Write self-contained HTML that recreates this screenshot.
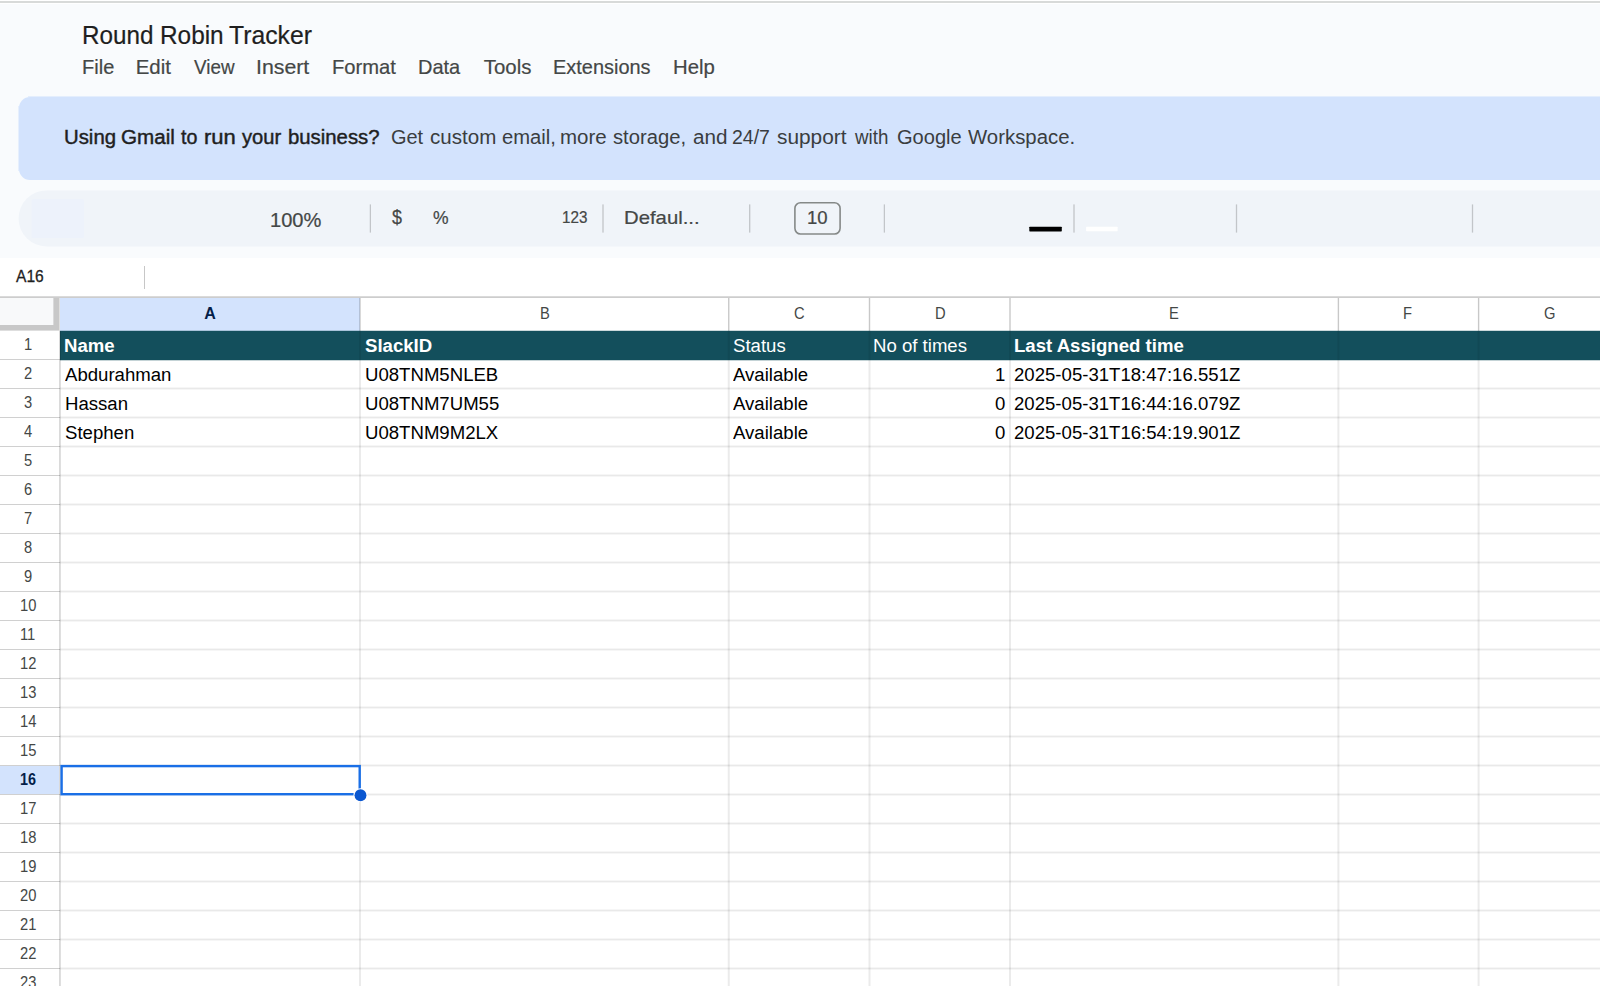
<!DOCTYPE html><html><head><meta charset="utf-8"><title>Round Robin Tracker</title><style>
html,body{margin:0;padding:0;}
body{width:1600px;height:986px;overflow:hidden;position:relative;background:#f9fbfd;font-family:"Liberation Sans",sans-serif;}
.a{position:absolute;}
.t{position:absolute;white-space:pre;line-height:1;transform-origin:0 0;}
.sep{position:absolute;width:1px;background:#c8c9ca;top:204px;height:28px;}
.hl{position:absolute;height:1px;left:0;}
.vl{position:absolute;width:1px;}
</style></head><body>
<div class="a" style="left:0;top:0;width:1600px;height:1px;background:#fff"></div>
<div class="a" style="left:0;top:1px;width:1600px;height:2px;background:#d8dad9"></div>
<div class="a" style="left:0;top:3px;width:1600px;height:1px;background:#fff"></div>
<div class="a" style="left:19px;top:97px;width:1600px;height:83px;background:#d3e3fd;border-radius:11px 0 0 11px;"></div>
<div class="a" style="left:18px;top:106px;width:1px;height:65px;background:#e6effd;"></div>
<div class="a" style="left:28px;top:96px;width:1580px;height:1px;background:#e4eefd;"></div>
<svg class="a" style="left:0;top:185px;" width="1600" height="70" viewBox="0 185 1600 70"><rect x="18.6" y="190.4" width="1640" height="56.1" rx="28" fill="#f0f4f9"/><rect x="31.7" y="198.9" width="52.1" height="39.4" rx="1.5" fill="#edf2fb"/></svg>
<div class="vl" style="left:369px;top:205px;height:27px;background:rgba(0,0,0,0.048);"></div>
<div class="vl" style="left:370px;top:205px;height:27px;background:rgba(0,0,0,0.192);"></div>
<div class="vl" style="left:369px;top:204px;height:1px;background:rgba(0,0,0,0.029);"></div>
<div class="vl" style="left:370px;top:204px;height:1px;background:rgba(0,0,0,0.115);"></div>
<div class="vl" style="left:369px;top:232px;height:1px;background:rgba(0,0,0,0.029);"></div>
<div class="vl" style="left:370px;top:232px;height:1px;background:rgba(0,0,0,0.115);"></div>
<div class="vl" style="left:602px;top:205px;height:27px;background:rgba(0,0,0,0.125);"></div>
<div class="vl" style="left:603px;top:205px;height:27px;background:rgba(0,0,0,0.125);"></div>
<div class="vl" style="left:602px;top:204px;height:1px;background:rgba(0,0,0,0.075);"></div>
<div class="vl" style="left:603px;top:204px;height:1px;background:rgba(0,0,0,0.075);"></div>
<div class="vl" style="left:602px;top:232px;height:1px;background:rgba(0,0,0,0.075);"></div>
<div class="vl" style="left:603px;top:232px;height:1px;background:rgba(0,0,0,0.075);"></div>
<div class="vl" style="left:749px;top:205px;height:27px;background:rgba(0,0,0,0.183);"></div>
<div class="vl" style="left:750px;top:205px;height:27px;background:rgba(0,0,0,0.067);"></div>
<div class="vl" style="left:749px;top:204px;height:1px;background:rgba(0,0,0,0.110);"></div>
<div class="vl" style="left:750px;top:204px;height:1px;background:rgba(0,0,0,0.040);"></div>
<div class="vl" style="left:749px;top:232px;height:1px;background:rgba(0,0,0,0.110);"></div>
<div class="vl" style="left:750px;top:232px;height:1px;background:rgba(0,0,0,0.040);"></div>
<div class="vl" style="left:883px;top:205px;height:27px;background:rgba(0,0,0,0.048);"></div>
<div class="vl" style="left:884px;top:205px;height:27px;background:rgba(0,0,0,0.192);"></div>
<div class="vl" style="left:883px;top:204px;height:1px;background:rgba(0,0,0,0.029);"></div>
<div class="vl" style="left:884px;top:204px;height:1px;background:rgba(0,0,0,0.115);"></div>
<div class="vl" style="left:883px;top:232px;height:1px;background:rgba(0,0,0,0.029);"></div>
<div class="vl" style="left:884px;top:232px;height:1px;background:rgba(0,0,0,0.115);"></div>
<div class="vl" style="left:1073px;top:205px;height:27px;background:rgba(0,0,0,0.125);"></div>
<div class="vl" style="left:1074px;top:205px;height:27px;background:rgba(0,0,0,0.125);"></div>
<div class="vl" style="left:1073px;top:204px;height:1px;background:rgba(0,0,0,0.075);"></div>
<div class="vl" style="left:1074px;top:204px;height:1px;background:rgba(0,0,0,0.075);"></div>
<div class="vl" style="left:1073px;top:232px;height:1px;background:rgba(0,0,0,0.075);"></div>
<div class="vl" style="left:1074px;top:232px;height:1px;background:rgba(0,0,0,0.075);"></div>
<div class="vl" style="left:1235px;top:205px;height:27px;background:rgba(0,0,0,0.029);"></div>
<div class="vl" style="left:1236px;top:205px;height:27px;background:rgba(0,0,0,0.192);"></div>
<div class="vl" style="left:1237px;top:205px;height:27px;background:rgba(0,0,0,0.029);"></div>
<div class="vl" style="left:1235px;top:204px;height:1px;background:rgba(0,0,0,0.017);"></div>
<div class="vl" style="left:1236px;top:204px;height:1px;background:rgba(0,0,0,0.115);"></div>
<div class="vl" style="left:1237px;top:204px;height:1px;background:rgba(0,0,0,0.017);"></div>
<div class="vl" style="left:1235px;top:232px;height:1px;background:rgba(0,0,0,0.017);"></div>
<div class="vl" style="left:1236px;top:232px;height:1px;background:rgba(0,0,0,0.115);"></div>
<div class="vl" style="left:1237px;top:232px;height:1px;background:rgba(0,0,0,0.017);"></div>
<div class="vl" style="left:1471px;top:205px;height:27px;background:rgba(0,0,0,0.029);"></div>
<div class="vl" style="left:1472px;top:205px;height:27px;background:rgba(0,0,0,0.192);"></div>
<div class="vl" style="left:1473px;top:205px;height:27px;background:rgba(0,0,0,0.029);"></div>
<div class="vl" style="left:1471px;top:204px;height:1px;background:rgba(0,0,0,0.017);"></div>
<div class="vl" style="left:1472px;top:204px;height:1px;background:rgba(0,0,0,0.115);"></div>
<div class="vl" style="left:1473px;top:204px;height:1px;background:rgba(0,0,0,0.017);"></div>
<div class="vl" style="left:1471px;top:232px;height:1px;background:rgba(0,0,0,0.017);"></div>
<div class="vl" style="left:1472px;top:232px;height:1px;background:rgba(0,0,0,0.115);"></div>
<div class="vl" style="left:1473px;top:232px;height:1px;background:rgba(0,0,0,0.017);"></div>
<svg class="a" style="left:790px;top:198px;" width="56" height="42" viewBox="790 198 56 42"><rect x="794.9" y="202.75" width="45.2" height="31.2" rx="5.6" fill="none" stroke="#858988" stroke-width="1.6"/></svg>
<svg class="a" style="left:1020px;top:220px;" width="110" height="18" viewBox="1020 220 110 18"><rect x="1029.3" y="226.7" width="32.5" height="4.7" rx="0.6" fill="#000"/><rect x="1086.1" y="226.8" width="31.5" height="4.4" rx="0.4" fill="#fff"/></svg>
<div class="a" style="left:0;top:258px;width:1600px;height:39px;background:#fff;"></div>
<div class="a" style="left:144px;top:266px;width:1px;height:23px;background:#c7c7c7;"></div>
<div class="a" style="left:0;top:296px;width:1600px;height:690px;background:#fff;"></div>
<div class="a" style="left:0;top:298px;width:54px;height:27px;background:#f8f9fa;"></div>
<div class="a" style="left:54px;top:298px;width:5px;height:32px;background:#c8c8c8;"></div>
<div class="a" style="left:53px;top:298px;width:1px;height:27px;background:#dadadb;"></div>
<div class="a" style="left:59px;top:298px;width:1px;height:33px;background:#e0e0e0;"></div>
<div class="a" style="left:0px;top:330px;width:59px;height:1px;background:#dedede;"></div>
<div class="a" style="left:0px;top:325px;width:59px;height:5px;background:#c8c8c8;"></div>
<div class="a" style="left:60px;top:296px;width:300px;height:35px;background:#d3e3fd;"></div>
<div class="a" style="left:0;top:296px;width:1600px;height:1px;background:#dadada;"></div>
<div class="a" style="left:0;top:297px;width:1600px;height:1px;background:#cdcdcd;"></div>
<div class="vl" style="left:359px;top:298px;height:33px;background:rgba(0,0,0,0.150);"></div>
<div class="vl" style="left:360px;top:298px;height:33px;background:rgba(0,0,0,0.150);"></div>
<div class="vl" style="left:728px;top:298px;height:33px;background:rgba(0,0,0,0.204);"></div>
<div class="vl" style="left:729px;top:298px;height:33px;background:rgba(0,0,0,0.096);"></div>
<div class="vl" style="left:868px;top:298px;height:33px;background:rgba(0,0,0,0.043);"></div>
<div class="vl" style="left:869px;top:298px;height:33px;background:rgba(0,0,0,0.214);"></div>
<div class="vl" style="left:870px;top:298px;height:33px;background:rgba(0,0,0,0.043);"></div>
<div class="vl" style="left:1009px;top:298px;height:33px;background:rgba(0,0,0,0.150);"></div>
<div class="vl" style="left:1010px;top:298px;height:33px;background:rgba(0,0,0,0.150);"></div>
<div class="vl" style="left:1337px;top:298px;height:33px;background:rgba(0,0,0,0.064);"></div>
<div class="vl" style="left:1338px;top:298px;height:33px;background:rgba(0,0,0,0.214);"></div>
<div class="vl" style="left:1339px;top:298px;height:33px;background:rgba(0,0,0,0.021);"></div>
<div class="vl" style="left:1477px;top:298px;height:33px;background:rgba(0,0,0,0.021);"></div>
<div class="vl" style="left:1478px;top:298px;height:33px;background:rgba(0,0,0,0.214);"></div>
<div class="vl" style="left:1479px;top:298px;height:33px;background:rgba(0,0,0,0.064);"></div>
<div class="a" style="left:60px;top:331px;width:1540px;height:29px;background:#134f5c;"></div>
<div class="a" style="left:60px;top:330px;width:1540px;height:1px;background:rgba(19,79,92,0.22);"></div>
<div class="a" style="left:60px;top:360px;width:1540px;height:1px;background:rgba(19,79,92,0.25);"></div>
<div class="hl" style="top:359px;width:60px;background:#d0d0d0;"></div>
<div class="hl" style="top:388px;left:60px;width:1540px;background:rgba(0,0,0,0.085);box-shadow:0 1px rgba(0,0,0,0.035),0 -1px rgba(0,0,0,0.035);"></div>
<div class="hl" style="top:388px;width:60px;background:#d0d0d0;"></div>
<div class="hl" style="top:417px;left:60px;width:1540px;background:rgba(0,0,0,0.085);box-shadow:0 1px rgba(0,0,0,0.035),0 -1px rgba(0,0,0,0.035);"></div>
<div class="hl" style="top:417px;width:60px;background:#d0d0d0;"></div>
<div class="hl" style="top:446px;left:60px;width:1540px;background:rgba(0,0,0,0.085);box-shadow:0 1px rgba(0,0,0,0.035),0 -1px rgba(0,0,0,0.035);"></div>
<div class="hl" style="top:446px;width:60px;background:#d0d0d0;"></div>
<div class="hl" style="top:475px;left:60px;width:1540px;background:rgba(0,0,0,0.085);box-shadow:0 1px rgba(0,0,0,0.035),0 -1px rgba(0,0,0,0.035);"></div>
<div class="hl" style="top:475px;width:60px;background:#d0d0d0;"></div>
<div class="hl" style="top:504px;left:60px;width:1540px;background:rgba(0,0,0,0.085);box-shadow:0 1px rgba(0,0,0,0.035),0 -1px rgba(0,0,0,0.035);"></div>
<div class="hl" style="top:504px;width:60px;background:#d0d0d0;"></div>
<div class="hl" style="top:533px;left:60px;width:1540px;background:rgba(0,0,0,0.085);box-shadow:0 1px rgba(0,0,0,0.035),0 -1px rgba(0,0,0,0.035);"></div>
<div class="hl" style="top:533px;width:60px;background:#d0d0d0;"></div>
<div class="hl" style="top:562px;left:60px;width:1540px;background:rgba(0,0,0,0.085);box-shadow:0 1px rgba(0,0,0,0.035),0 -1px rgba(0,0,0,0.035);"></div>
<div class="hl" style="top:562px;width:60px;background:#d0d0d0;"></div>
<div class="hl" style="top:591px;left:60px;width:1540px;background:rgba(0,0,0,0.085);box-shadow:0 1px rgba(0,0,0,0.035),0 -1px rgba(0,0,0,0.035);"></div>
<div class="hl" style="top:591px;width:60px;background:#d0d0d0;"></div>
<div class="hl" style="top:620px;left:60px;width:1540px;background:rgba(0,0,0,0.085);box-shadow:0 1px rgba(0,0,0,0.035),0 -1px rgba(0,0,0,0.035);"></div>
<div class="hl" style="top:620px;width:60px;background:#d0d0d0;"></div>
<div class="hl" style="top:649px;left:60px;width:1540px;background:rgba(0,0,0,0.085);box-shadow:0 1px rgba(0,0,0,0.035),0 -1px rgba(0,0,0,0.035);"></div>
<div class="hl" style="top:649px;width:60px;background:#d0d0d0;"></div>
<div class="hl" style="top:678px;left:60px;width:1540px;background:rgba(0,0,0,0.085);box-shadow:0 1px rgba(0,0,0,0.035),0 -1px rgba(0,0,0,0.035);"></div>
<div class="hl" style="top:678px;width:60px;background:#d0d0d0;"></div>
<div class="hl" style="top:707px;left:60px;width:1540px;background:rgba(0,0,0,0.085);box-shadow:0 1px rgba(0,0,0,0.035),0 -1px rgba(0,0,0,0.035);"></div>
<div class="hl" style="top:707px;width:60px;background:#d0d0d0;"></div>
<div class="hl" style="top:736px;left:60px;width:1540px;background:rgba(0,0,0,0.085);box-shadow:0 1px rgba(0,0,0,0.035),0 -1px rgba(0,0,0,0.035);"></div>
<div class="hl" style="top:736px;width:60px;background:#d0d0d0;"></div>
<div class="hl" style="top:765px;left:60px;width:1540px;background:rgba(0,0,0,0.085);box-shadow:0 1px rgba(0,0,0,0.035),0 -1px rgba(0,0,0,0.035);"></div>
<div class="hl" style="top:765px;width:60px;background:#d0d0d0;"></div>
<div class="hl" style="top:794px;left:60px;width:1540px;background:rgba(0,0,0,0.085);box-shadow:0 1px rgba(0,0,0,0.035),0 -1px rgba(0,0,0,0.035);"></div>
<div class="hl" style="top:794px;width:60px;background:#d0d0d0;"></div>
<div class="hl" style="top:823px;left:60px;width:1540px;background:rgba(0,0,0,0.085);box-shadow:0 1px rgba(0,0,0,0.035),0 -1px rgba(0,0,0,0.035);"></div>
<div class="hl" style="top:823px;width:60px;background:#d0d0d0;"></div>
<div class="hl" style="top:852px;left:60px;width:1540px;background:rgba(0,0,0,0.085);box-shadow:0 1px rgba(0,0,0,0.035),0 -1px rgba(0,0,0,0.035);"></div>
<div class="hl" style="top:852px;width:60px;background:#d0d0d0;"></div>
<div class="hl" style="top:881px;left:60px;width:1540px;background:rgba(0,0,0,0.085);box-shadow:0 1px rgba(0,0,0,0.035),0 -1px rgba(0,0,0,0.035);"></div>
<div class="hl" style="top:881px;width:60px;background:#d0d0d0;"></div>
<div class="hl" style="top:910px;left:60px;width:1540px;background:rgba(0,0,0,0.085);box-shadow:0 1px rgba(0,0,0,0.035),0 -1px rgba(0,0,0,0.035);"></div>
<div class="hl" style="top:910px;width:60px;background:#d0d0d0;"></div>
<div class="hl" style="top:939px;left:60px;width:1540px;background:rgba(0,0,0,0.085);box-shadow:0 1px rgba(0,0,0,0.035),0 -1px rgba(0,0,0,0.035);"></div>
<div class="hl" style="top:939px;width:60px;background:#d0d0d0;"></div>
<div class="hl" style="top:968px;left:60px;width:1540px;background:rgba(0,0,0,0.085);box-shadow:0 1px rgba(0,0,0,0.035),0 -1px rgba(0,0,0,0.035);"></div>
<div class="hl" style="top:968px;width:60px;background:#d0d0d0;"></div>
<div class="vl" style="left:359px;top:360px;height:626px;background:rgba(0,0,0,0.080);"></div>
<div class="vl" style="left:360px;top:360px;height:626px;background:rgba(0,0,0,0.080);"></div>
<div class="vl" style="left:359px;top:331px;height:29px;background:rgba(0,0,0,0.070);"></div>
<div class="vl" style="left:360px;top:331px;height:29px;background:rgba(0,0,0,0.070);"></div>
<div class="vl" style="left:727px;top:360px;height:626px;background:rgba(0,0,0,0.020);"></div>
<div class="vl" style="left:728px;top:360px;height:626px;background:rgba(0,0,0,0.080);"></div>
<div class="vl" style="left:729px;top:360px;height:626px;background:rgba(0,0,0,0.060);"></div>
<div class="vl" style="left:727px;top:331px;height:29px;background:rgba(0,0,0,0.018);"></div>
<div class="vl" style="left:728px;top:331px;height:29px;background:rgba(0,0,0,0.070);"></div>
<div class="vl" style="left:729px;top:331px;height:29px;background:rgba(0,0,0,0.053);"></div>
<div class="vl" style="left:868px;top:360px;height:626px;background:rgba(0,0,0,0.040);"></div>
<div class="vl" style="left:869px;top:360px;height:626px;background:rgba(0,0,0,0.080);"></div>
<div class="vl" style="left:870px;top:360px;height:626px;background:rgba(0,0,0,0.040);"></div>
<div class="vl" style="left:868px;top:331px;height:29px;background:rgba(0,0,0,0.035);"></div>
<div class="vl" style="left:869px;top:331px;height:29px;background:rgba(0,0,0,0.070);"></div>
<div class="vl" style="left:870px;top:331px;height:29px;background:rgba(0,0,0,0.035);"></div>
<div class="vl" style="left:1009px;top:360px;height:626px;background:rgba(0,0,0,0.080);"></div>
<div class="vl" style="left:1010px;top:360px;height:626px;background:rgba(0,0,0,0.080);"></div>
<div class="vl" style="left:1009px;top:331px;height:29px;background:rgba(0,0,0,0.070);"></div>
<div class="vl" style="left:1010px;top:331px;height:29px;background:rgba(0,0,0,0.070);"></div>
<div class="vl" style="left:1337px;top:360px;height:626px;background:rgba(0,0,0,0.048);"></div>
<div class="vl" style="left:1338px;top:360px;height:626px;background:rgba(0,0,0,0.080);"></div>
<div class="vl" style="left:1339px;top:360px;height:626px;background:rgba(0,0,0,0.032);"></div>
<div class="vl" style="left:1337px;top:331px;height:29px;background:rgba(0,0,0,0.042);"></div>
<div class="vl" style="left:1338px;top:331px;height:29px;background:rgba(0,0,0,0.070);"></div>
<div class="vl" style="left:1339px;top:331px;height:29px;background:rgba(0,0,0,0.028);"></div>
<div class="vl" style="left:1477px;top:360px;height:626px;background:rgba(0,0,0,0.032);"></div>
<div class="vl" style="left:1478px;top:360px;height:626px;background:rgba(0,0,0,0.080);"></div>
<div class="vl" style="left:1479px;top:360px;height:626px;background:rgba(0,0,0,0.048);"></div>
<div class="vl" style="left:1477px;top:331px;height:29px;background:rgba(0,0,0,0.028);"></div>
<div class="vl" style="left:1478px;top:331px;height:29px;background:rgba(0,0,0,0.070);"></div>
<div class="vl" style="left:1479px;top:331px;height:29px;background:rgba(0,0,0,0.042);"></div>
<div class="vl" style="left:59px;top:331px;height:655px;background:rgba(0,0,0,0.144);"></div>
<div class="vl" style="left:60px;top:331px;height:655px;background:rgba(0,0,0,0.126);"></div>
<div class="a" style="left:0;top:766px;width:59px;height:28px;background:#d3e3fd;"></div>
<div class="doc-title">
<span class="t" style="left:81.81px;top:22.00px;font-size:26px;color:#1f1f1f;transform:scaleX(0.9326);-webkit-text-stroke:0.22px #1f1f1f;">Round </span>
<span class="t" style="left:160.30px;top:22.00px;font-size:26px;color:#1f1f1f;transform:scaleX(0.9373);-webkit-text-stroke:0.22px #1f1f1f;">Robin </span>
<span class="t" style="left:229.21px;top:22.00px;font-size:26px;color:#1f1f1f;transform:scaleX(0.9513);-webkit-text-stroke:0.22px #1f1f1f;">Tracker </span>
</div>
<div class="menubar">
<span class="t" style="left:82.14px;top:57.00px;font-size:20.4px;color:#444746;transform:scaleX(0.9819);-webkit-text-stroke:0.2px #444746;">File </span>
<span class="t" style="left:135.71px;top:57.00px;font-size:20.4px;color:#444746;-webkit-text-stroke:0.2px #444746;">Edit </span>
<span class="t" style="left:194.10px;top:57.00px;font-size:20.4px;color:#444746;transform:scaleX(0.9252);-webkit-text-stroke:0.2px #444746;">View </span>
<span class="t" style="left:256.34px;top:57.00px;font-size:20.4px;color:#444746;transform:scaleX(1.0445);-webkit-text-stroke:0.2px #444746;">Insert </span>
<span class="t" style="left:331.82px;top:57.00px;font-size:20.4px;color:#444746;transform:scaleX(0.9892);-webkit-text-stroke:0.2px #444746;">Format </span>
<span class="t" style="left:418.14px;top:57.00px;font-size:20.4px;color:#444746;transform:scaleX(0.9801);-webkit-text-stroke:0.2px #444746;">Data </span>
<span class="t" style="left:483.78px;top:57.00px;font-size:20.4px;color:#444746;-webkit-text-stroke:0.2px #444746;">Tools </span>
<span class="t" style="left:552.94px;top:57.00px;font-size:20.4px;color:#444746;transform:scaleX(0.9779);-webkit-text-stroke:0.2px #444746;">Extensions </span>
<span class="t" style="left:672.61px;top:57.00px;font-size:20.4px;color:#444746;transform:scaleX(0.9966);-webkit-text-stroke:0.2px #444746;">Help </span>
</div>
<div class="promo-banner">
<span class="t" style="left:64.43px;top:128.00px;font-size:19.6px;color:#1f1f1f;transform:scaleX(1.0380);-webkit-text-stroke:0.42px #1f1f1f;">Using </span>
<span class="t" style="left:121.23px;top:128.00px;font-size:19.6px;color:#1f1f1f;transform:scaleX(1.0516);-webkit-text-stroke:0.42px #1f1f1f;">Gmail </span>
<span class="t" style="left:181.10px;top:128.00px;font-size:19.6px;color:#1f1f1f;transform:scaleX(1.0031);-webkit-text-stroke:0.42px #1f1f1f;">to </span>
<span class="t" style="left:203.72px;top:128.00px;font-size:19.6px;color:#1f1f1f;transform:scaleX(1.1230);-webkit-text-stroke:0.42px #1f1f1f;">run </span>
<span class="t" style="left:241.90px;top:128.00px;font-size:19.6px;color:#1f1f1f;transform:scaleX(1.0281);-webkit-text-stroke:0.42px #1f1f1f;">your </span>
<span class="t" style="left:287.73px;top:128.00px;font-size:19.6px;color:#1f1f1f;transform:scaleX(1.0376);-webkit-text-stroke:0.42px #1f1f1f;">business? </span>
<span class="t" style="left:391.06px;top:128.00px;font-size:19.6px;color:#3a3d40;transform:scaleX(1.0182);">Get </span>
<span class="t" style="left:429.66px;top:128.00px;font-size:19.6px;color:#3a3d40;transform:scaleX(1.0496);">custom </span>
<span class="t" style="left:501.67px;top:128.00px;font-size:19.6px;color:#3a3d40;transform:scaleX(1.0318);">email, </span>
<span class="t" style="left:560.42px;top:128.00px;font-size:19.6px;color:#3a3d40;transform:scaleX(1.0461);">more </span>
<span class="t" style="left:613.38px;top:128.00px;font-size:19.6px;color:#3a3d40;transform:scaleX(1.0326);">storage, </span>
<span class="t" style="left:693.35px;top:128.00px;font-size:19.6px;color:#3a3d40;transform:scaleX(1.0552);">and </span>
<span class="t" style="left:731.89px;top:128.00px;font-size:19.6px;color:#3a3d40;transform:scaleX(0.9936);">24/7 </span>
<span class="t" style="left:777.07px;top:128.00px;font-size:19.6px;color:#3a3d40;transform:scaleX(1.0639);">support </span>
<span class="t" style="left:855.29px;top:128.00px;font-size:19.6px;color:#3a3d40;transform:scaleX(0.9571);">with </span>
<span class="t" style="left:896.86px;top:128.00px;font-size:19.6px;color:#3a3d40;transform:scaleX(1.0246);">Google </span>
<span class="t" style="left:967.50px;top:128.00px;font-size:19.6px;color:#3a3d40;transform:scaleX(1.0390);">Workspace. </span>
</div>
<div class="toolbar">
<span class="t" style="left:270.14px;top:211.00px;font-size:19.6px;color:#444746;transform:scaleX(1.0265);-webkit-text-stroke:0.22px #444746;">100% </span>
<span class="t" style="left:392.00px;top:208.00px;font-size:19.6px;color:#444746;transform:scaleX(0.9143);-webkit-text-stroke:0.22px #444746;">$ </span>
<span class="t" style="left:433.35px;top:209.00px;font-size:18px;color:#444746;transform:scaleX(0.9727);-webkit-text-stroke:0.22px #444746;">% </span>
<span class="t" style="left:562.05px;top:210.00px;font-size:15.6px;color:#444746;transform:scaleX(0.9746);-webkit-text-stroke:0.22px #444746;">123 </span>
<span class="t" style="left:624.21px;top:209.00px;font-size:18.6px;color:#444746;transform:scaleX(1.0917);-webkit-text-stroke:0.22px #444746;">Defaul... </span>
<span class="t" style="left:806.84px;top:209.00px;font-size:18.6px;color:#444746;transform:scaleX(0.9967);-webkit-text-stroke:0.22px #444746;">10 </span>
</div>
<div class="name-box">
<span class="t" style="left:15.90px;top:268.00px;font-size:17.1px;color:#1f1f1f;transform:scaleX(0.9114);-webkit-text-stroke:0.3px #1f1f1f;">A16 </span>
</div>
<div class="col-headers">
<span class="t" style="left:204.35px;top:306.00px;font-size:16px;color:#041e49;font-weight:700;">A </span>
<span class="t" style="left:540.12px;top:306.00px;font-size:16px;color:#444746;transform:scaleX(0.9200);">B </span>
<span class="t" style="left:794.19px;top:306.00px;font-size:16px;color:#444746;transform:scaleX(0.9200);">C </span>
<span class="t" style="left:934.66px;top:306.00px;font-size:16px;color:#444746;transform:scaleX(0.9200);">D </span>
<span class="t" style="left:1169.33px;top:306.00px;font-size:16px;color:#444746;transform:scaleX(0.9200);">E </span>
<span class="t" style="left:1402.97px;top:306.00px;font-size:16px;color:#444746;transform:scaleX(0.9200);">F </span>
<span class="t" style="left:1543.58px;top:306.00px;font-size:16px;color:#444746;transform:scaleX(0.9200);">G </span>
</div>
<div class="row-headers">
<span class="t" style="left:23.95px;top:337.00px;font-size:16px;color:#444746;transform:scaleX(0.9200);">1 </span>
<span class="t" style="left:24.06px;top:366.00px;font-size:16px;color:#444746;transform:scaleX(0.9200);">2 </span>
<span class="t" style="left:24.17px;top:395.00px;font-size:16px;color:#444746;transform:scaleX(0.9200);">3 </span>
<span class="t" style="left:24.17px;top:424.00px;font-size:16px;color:#444746;transform:scaleX(0.9200);">4 </span>
<span class="t" style="left:24.17px;top:453.00px;font-size:16px;color:#444746;transform:scaleX(0.9200);">5 </span>
<span class="t" style="left:24.06px;top:482.00px;font-size:16px;color:#444746;transform:scaleX(0.9200);">6 </span>
<span class="t" style="left:24.06px;top:511.00px;font-size:16px;color:#444746;transform:scaleX(0.9200);">7 </span>
<span class="t" style="left:24.17px;top:540.00px;font-size:16px;color:#444746;transform:scaleX(0.9200);">8 </span>
<span class="t" style="left:24.06px;top:569.00px;font-size:16px;color:#444746;transform:scaleX(0.9200);">9 </span>
<span class="t" style="left:19.74px;top:598.00px;font-size:16px;color:#444746;transform:scaleX(0.9200);">10 </span>
<span class="t" style="left:20.40px;top:627.00px;font-size:16px;color:#444746;transform:scaleX(0.9200);">11 </span>
<span class="t" style="left:19.85px;top:656.00px;font-size:16px;color:#444746;transform:scaleX(0.9200);">12 </span>
<span class="t" style="left:19.85px;top:685.00px;font-size:16px;color:#444746;transform:scaleX(0.9200);">13 </span>
<span class="t" style="left:19.74px;top:714.00px;font-size:16px;color:#444746;transform:scaleX(0.9200);">14 </span>
<span class="t" style="left:19.85px;top:743.00px;font-size:16px;color:#444746;transform:scaleX(0.9200);">15 </span>
<span class="t" style="left:20.12px;top:772.00px;font-size:16px;color:#041e49;font-weight:700;transform:scaleX(0.9000);">16 </span>
<span class="t" style="left:19.85px;top:801.00px;font-size:16px;color:#444746;transform:scaleX(0.9200);">17 </span>
<span class="t" style="left:19.85px;top:830.00px;font-size:16px;color:#444746;transform:scaleX(0.9200);">18 </span>
<span class="t" style="left:19.85px;top:859.00px;font-size:16px;color:#444746;transform:scaleX(0.9200);">19 </span>
<span class="t" style="left:19.85px;top:888.00px;font-size:16px;color:#444746;transform:scaleX(0.9200);">20 </span>
<span class="t" style="left:19.97px;top:917.00px;font-size:16px;color:#444746;transform:scaleX(0.9200);">21 </span>
<span class="t" style="left:19.97px;top:946.00px;font-size:16px;color:#444746;transform:scaleX(0.9200);">22 </span>
<span class="t" style="left:19.97px;top:975.00px;font-size:16px;color:#444746;transform:scaleX(0.9200);">23 </span>
</div>
<div class="row-1">
<span class="t" style="left:64.20px;top:336.00px;font-size:19.2px;color:#fff;font-weight:700;transform:scaleX(0.9688);">Name </span>
<span class="t" style="left:365.40px;top:336.00px;font-size:19.2px;color:#fff;font-weight:700;transform:scaleX(0.9688);">SlackID </span>
<span class="t" style="left:733.20px;top:336.00px;font-size:19.2px;color:#fff;transform:scaleX(0.9688);">Status </span>
<span class="t" style="left:873.20px;top:336.00px;font-size:19.2px;color:#fff;transform:scaleX(0.9688);">No of times </span>
<span class="t" style="left:1014.20px;top:336.00px;font-size:19.2px;color:#fff;font-weight:700;transform:scaleX(0.9688);">Last Assigned time </span>
</div>
<div class="row-2">
<span class="t" style="left:64.70px;top:365.00px;font-size:19.2px;color:#000;transform:scaleX(0.9688);">Abdurahman </span>
<span class="t" style="left:364.60px;top:365.00px;font-size:19.2px;color:#000;transform:scaleX(0.9688);">U08TNM5NLEB </span>
<span class="t" style="left:733.20px;top:365.00px;font-size:19.2px;color:#000;transform:scaleX(0.9688);">Available </span>
<span class="t" style="left:994.91px;top:365.00px;font-size:19.2px;color:#000;transform:scaleX(0.9688);">1 </span>
<span class="t" style="left:1014.20px;top:365.00px;font-size:19.2px;color:#000;transform:scaleX(0.9688);">2025-05-31T18:47:16.551Z </span>
</div>
<div class="row-3">
<span class="t" style="left:64.70px;top:394.00px;font-size:19.2px;color:#000;transform:scaleX(0.9688);">Hassan </span>
<span class="t" style="left:364.60px;top:394.00px;font-size:19.2px;color:#000;transform:scaleX(0.9688);">U08TNM7UM55 </span>
<span class="t" style="left:733.20px;top:394.00px;font-size:19.2px;color:#000;transform:scaleX(0.9688);">Available </span>
<span class="t" style="left:994.62px;top:394.00px;font-size:19.2px;color:#000;transform:scaleX(0.9688);">0 </span>
<span class="t" style="left:1014.20px;top:394.00px;font-size:19.2px;color:#000;transform:scaleX(0.9688);">2025-05-31T16:44:16.079Z </span>
</div>
<div class="row-4">
<span class="t" style="left:64.70px;top:423.00px;font-size:19.2px;color:#000;transform:scaleX(0.9688);">Stephen </span>
<span class="t" style="left:364.60px;top:423.00px;font-size:19.2px;color:#000;transform:scaleX(0.9688);">U08TNM9M2LX </span>
<span class="t" style="left:733.20px;top:423.00px;font-size:19.2px;color:#000;transform:scaleX(0.9688);">Available </span>
<span class="t" style="left:994.62px;top:423.00px;font-size:19.2px;color:#000;transform:scaleX(0.9688);">0 </span>
<span class="t" style="left:1014.20px;top:423.00px;font-size:19.2px;color:#000;transform:scaleX(0.9688);">2025-05-31T16:54:19.901Z </span>
</div>
<svg class="a" style="left:50px;top:755px;" width="330" height="55" viewBox="50 755 330 55"><rect x="61.6" y="766.1" width="298.1" height="28.1" fill="none" stroke="#1a6fe6" stroke-width="2.4"/><circle cx="360.5" cy="795.3" r="7" fill="#fff"/><circle cx="360.5" cy="795.3" r="5.95" fill="#0b57d0"/></svg>
</body></html>
